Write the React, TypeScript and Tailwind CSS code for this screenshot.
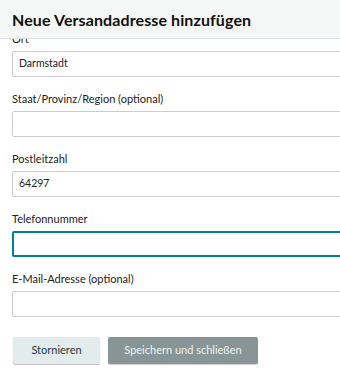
const fields = [
  { label: 'Ort', value: 'Darmstadt' },
  { label: 'Staat/Provinz/Region (optional)', value: '' },
  { label: 'Postleitzahl', value: '64297' },
  { label: 'Telefonnummer', value: '', focused: true },
  { label: 'E-Mail-Adresse (optional)', value: '' },
];

export default function App() {
  return (
    <div className="w-[340px] h-[378px] overflow-hidden bg-white text-[#0f1111] font-['Lato','Open_Sans',sans-serif] flex flex-col">
      <header className="h-[39px] shrink-0 bg-[#f6f7f7] border-b border-[#dcdfdf] px-3 flex items-center">
        <h1 className="text-[16px] font-bold tracking-[0.1px] text-[#111] pt-[2px]">Neue Versandadresse hinzufügen</h1>
      </header>
      <div className="flex-1 overflow-hidden">
        <form className="w-[360px] pl-3 -mt-[8px]">
          {fields.map((f) => (
            <div key={f.label} className="mb-[14px]">
              <label className="block text-[11px] leading-[16px] mb-[4px] text-[#222]">{f.label}</label>
              <div
                className={
                  f.focused
                    ? 'h-[26px] border-2 border-[#008296] rounded-[2px] bg-white'
                    : 'h-[26px] border border-[#c9cccc] rounded-[2px] bg-white flex items-center px-[6px] text-[10.5px] text-[#222]'
                }
              >
                {f.value}
              </div>
            </div>
          ))}
          <div className="flex gap-2 pt-[6px] pl-px">
            <button
              type="button"
              className="w-[87px] h-[27px] rounded-[2px] bg-[#e3eced] shadow-[0_1px_1px_rgba(0,0,0,0.25)] text-[11px] text-[#1d3b40]"
            >
              Stornieren
            </button>
            <button
              type="button"
              className="w-[150px] h-[27px] rounded-[2px] bg-[#879596] shadow-[0_1px_1px_rgba(0,0,0,0.2)] text-[11px] text-[#eef2f2]"
            >
              Speichern und schließen
            </button>
          </div>
        </form>
      </div>
    </div>
  );
}
